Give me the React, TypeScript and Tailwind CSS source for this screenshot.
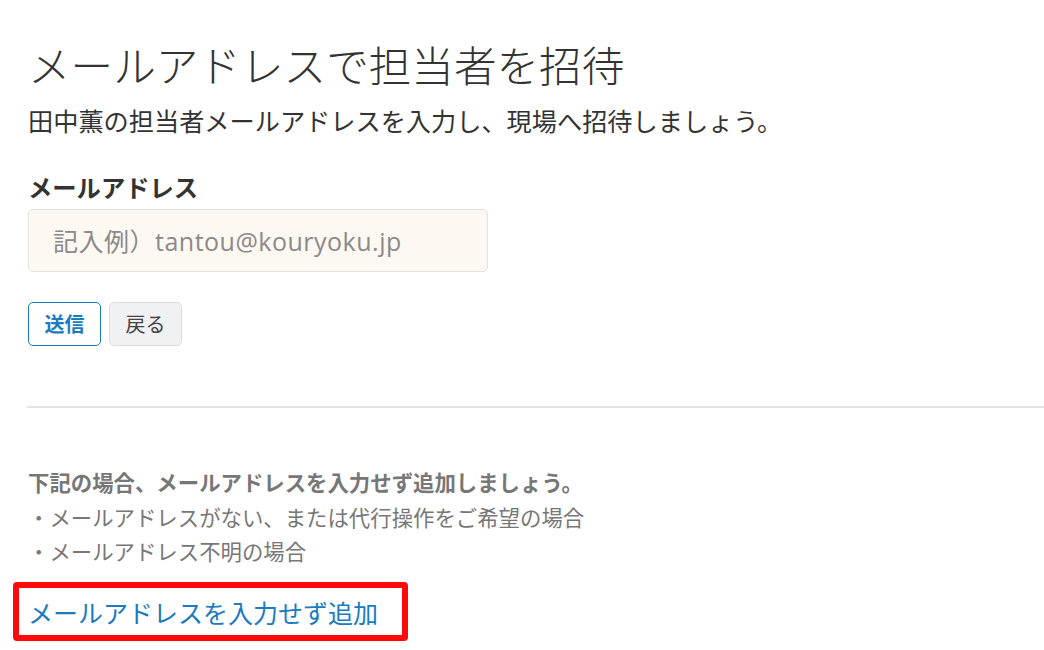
export default function App() {
  return (
    <div
      className="w-[1044px] h-[650px] bg-white overflow-hidden text-[#333]"
      style={{ fontFamily: '"Noto Sans CJK JP", "Noto Sans", sans-serif' }}
    >
      <div className="pl-[28px] pt-[37px]">
        <h1 className="text-[42.6px] leading-[54px] font-light text-[#333]">メールアドレスで担当者を招待</h1>
        <p className="text-[25.2px] leading-[36px] mt-[11px] text-[#333]">田中薫の担当者メールアドレスを入力し、現場へ招待しましょう。</p>
        <div className="mt-[32px] text-[24.3px] leading-[34px] font-bold text-[#333]">メールアドレス</div>
        <input
          className="mt-[5px] block w-[460px] h-[63px] rounded-[5px] border border-[#e2e2e2] bg-[#fef8f2] px-[24px] text-[25px] tracking-[0.5px] text-[#333] placeholder:text-[#8a8a8a] outline-none"
          style={{ fontFamily: '"Open Sans", "Noto Sans CJK JP", sans-serif' }}
          placeholder="記入例）tantou@kouryoku.jp"
        />
        <div className="mt-[30px] flex gap-[8px]">
          <button className="w-[73px] h-[44px] rounded-[5px] border border-[#1a7bbf] bg-white text-[20px] font-bold text-[#1a7bbf]">送信</button>
          <button className="w-[73px] h-[44px] rounded-[5px] border border-[#dcdcdc] bg-[#f0f1f2] text-[20px] text-[#444]">戻る</button>
        </div>
      </div>
      <div className="ml-[27px] mt-[60px] h-[2px] bg-[#e3e3e3]" />
      <div className="pl-[28px] pt-[56px]">
        <p className="text-[21.4px] leading-[35px] font-bold text-[#777]">下記の場合、メールアドレスを入力せず追加しましょう。</p>
        <p className="text-[21.4px] leading-[35px] text-[#777]">・メールアドレスがない、または代行操作をご希望の場合</p>
        <p className="text-[21.4px] leading-[34px] text-[#777]">・メールアドレス不明の場合</p>
      </div>
      <div className="ml-[13px] mt-[14px] w-[395px] h-[59px] border-[6px] border-[#ff0a0a] rounded-[4px] flex items-center pl-[9px]">
        <a className="text-[25px] leading-[34px] text-[#1a7bbf]" href="#">メールアドレスを入力せず追加</a>
      </div>
    </div>
  );
}
